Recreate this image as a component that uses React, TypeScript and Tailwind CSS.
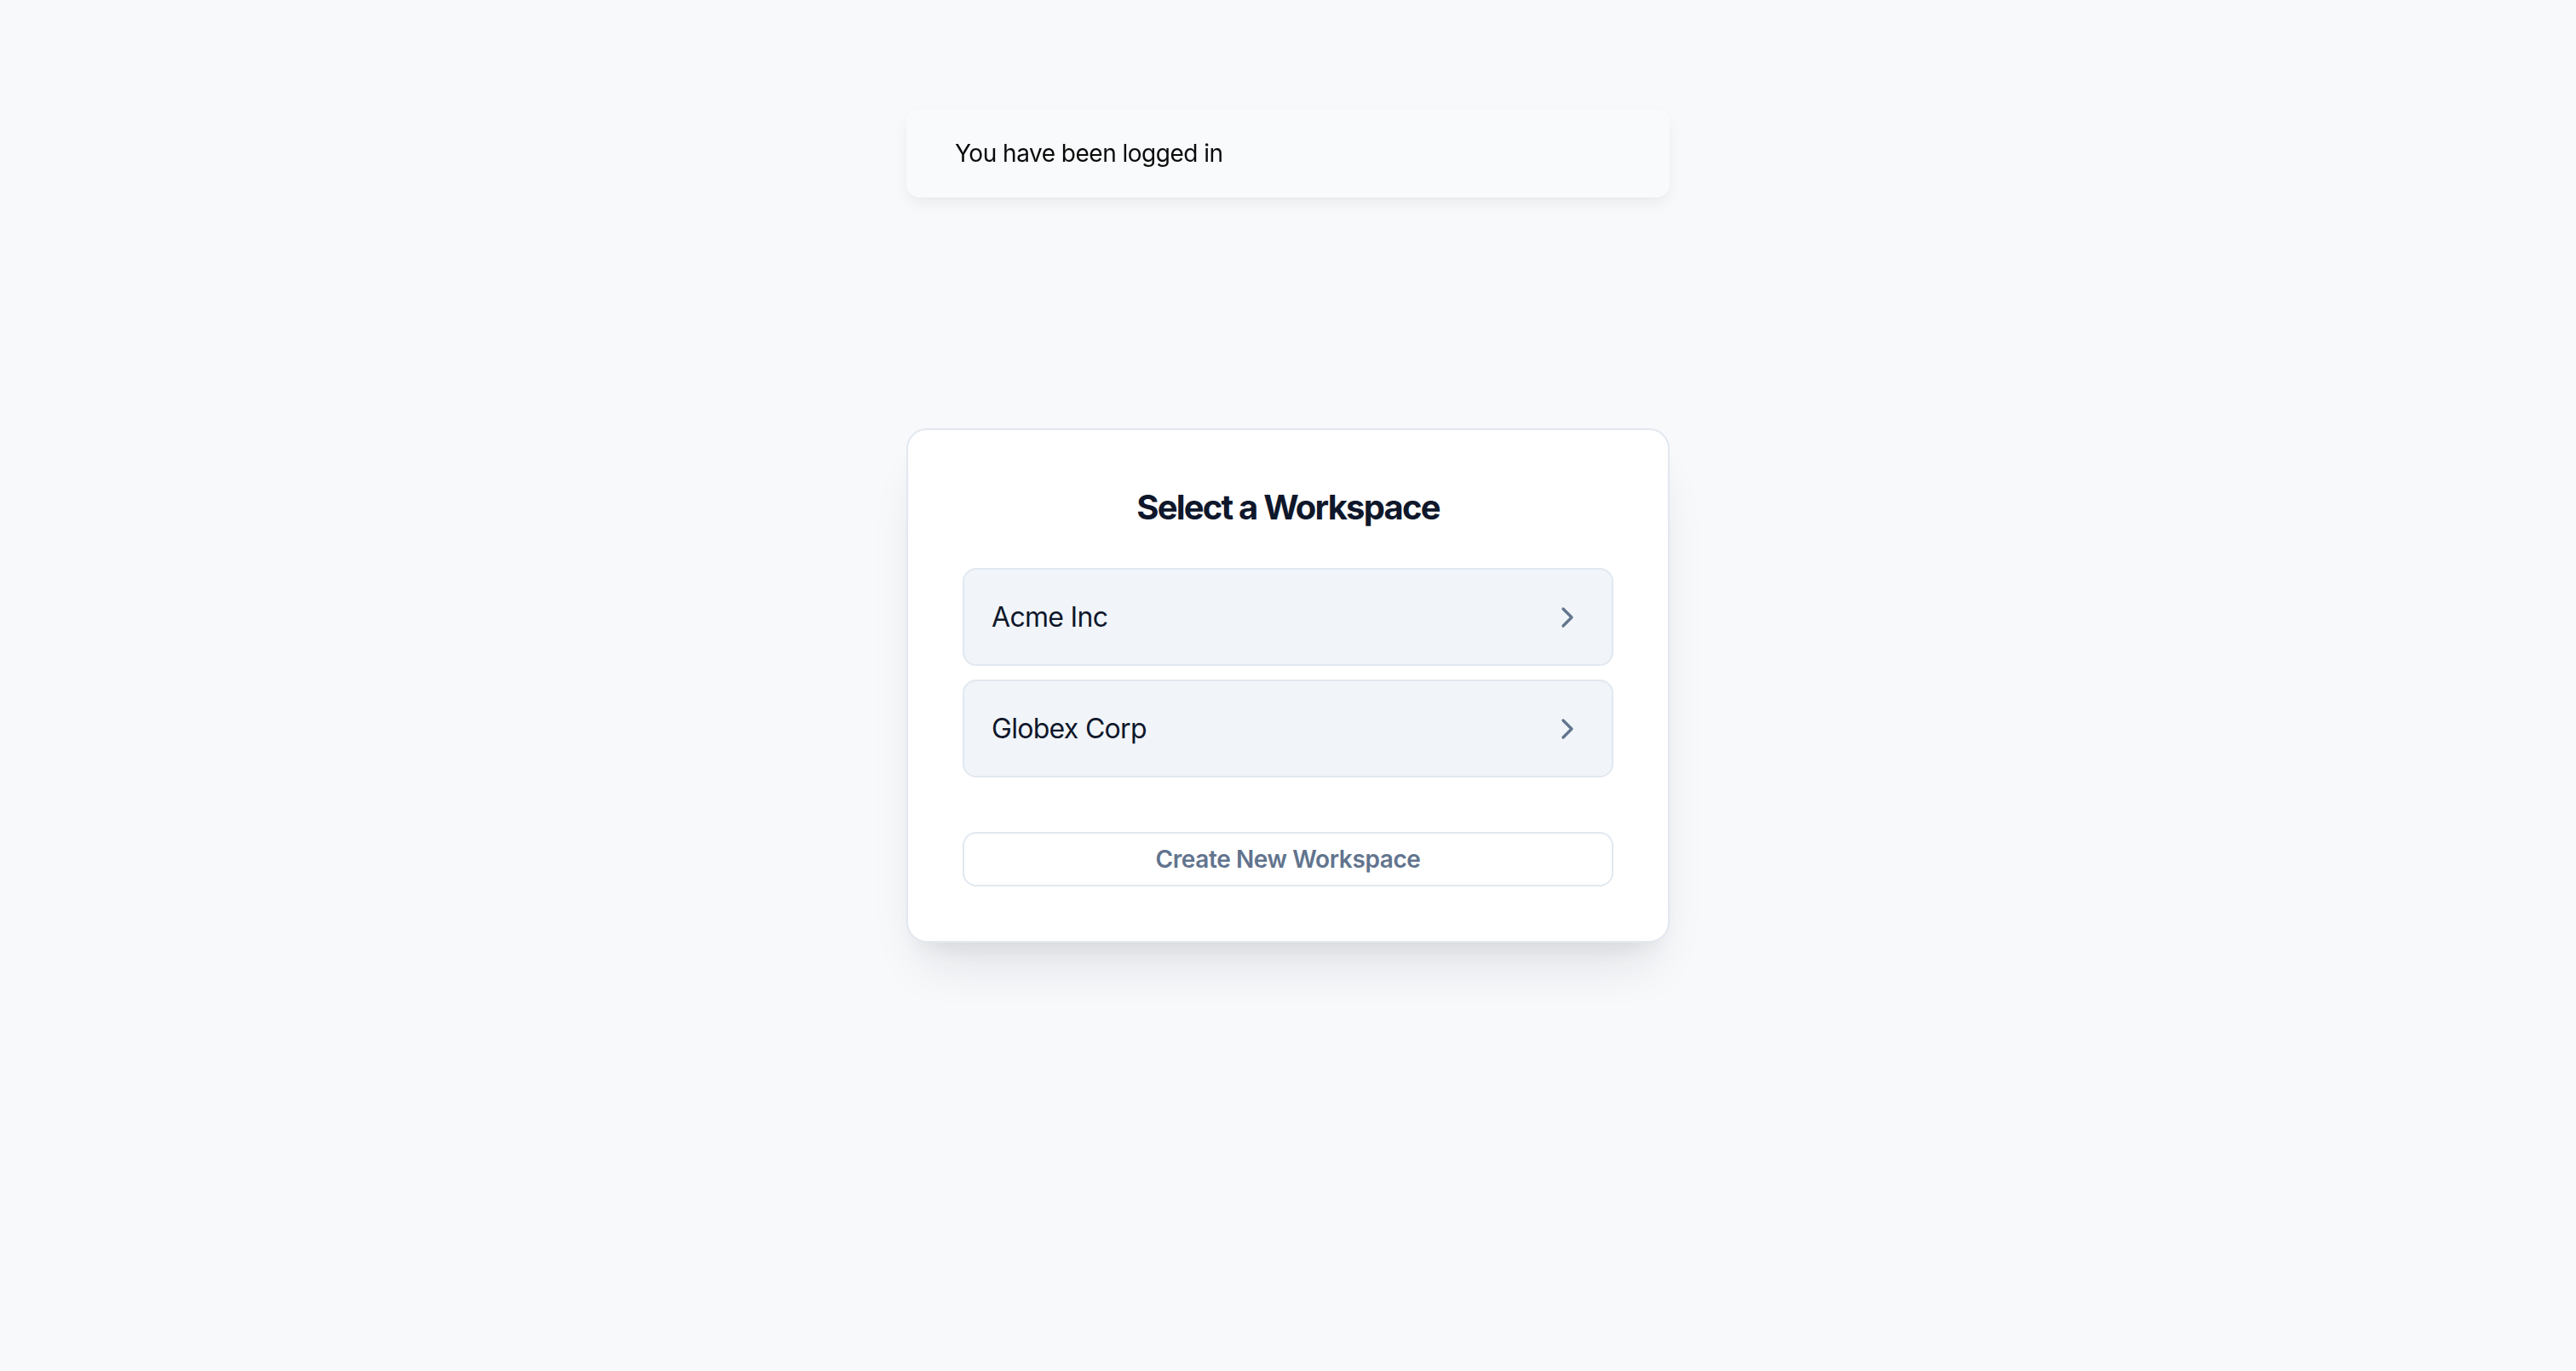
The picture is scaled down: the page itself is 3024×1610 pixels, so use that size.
import { ChevronRight } from "lucide-react";

const workspaces = ["Acme Inc", "Globex Corp"];

export default function App() {
  return (
    <div className="relative min-h-screen bg-[#f8f9fb] flex items-center justify-center font-['Inter','Noto_Sans',sans-serif] antialiased">
      {/* toast */}
      <div className="fixed top-[128px] left-1/2 -translate-x-1/2 w-[896px] h-[104px] flex items-center px-[57px] rounded-[16px] bg-[#f8fafc] shadow-[0_8px_20px_-4px_rgba(15,23,42,0.08),0_2px_6px_-2px_rgba(15,23,42,0.04)]">
        <span className="text-[28px] leading-[40px] tracking-[-0.5px] text-[#0a0a0a]">You have been logged in</span>
      </div>

      <div className="w-[896px] bg-white border-2 border-slate-200 rounded-[24px] p-[64px] shadow-[0_40px_60px_-20px_rgba(15,23,42,0.12),0_16px_24px_-12px_rgba(15,23,42,0.06)]">
        <h2 className="text-[40px] leading-[54px] font-bold text-center text-slate-900 tracking-[-1.8px]">
          Select a Workspace
        </h2>

        <div className="mt-[44px] flex flex-col gap-4">
          {workspaces.map((name) => (
            <button
              key={name}
              className="w-full h-[115px] flex items-center justify-between px-[32px] rounded-[16px] border-2 border-slate-200 bg-slate-100 text-left"
            >
              <span className="text-[32px] leading-[48px] tracking-[-0.7px] text-slate-900">{name}</span>
              <ChevronRight className="w-10 h-10 text-slate-500" strokeWidth={2} />
            </button>
          ))}
        </div>

        <button className="mt-[64px] w-full h-[64px] flex items-center justify-center rounded-[16px] border-2 border-slate-200 bg-white text-[28px] font-semibold tracking-[-0.4px] text-slate-500">
          Create New Workspace
        </button>
      </div>
    </div>
  );
}
